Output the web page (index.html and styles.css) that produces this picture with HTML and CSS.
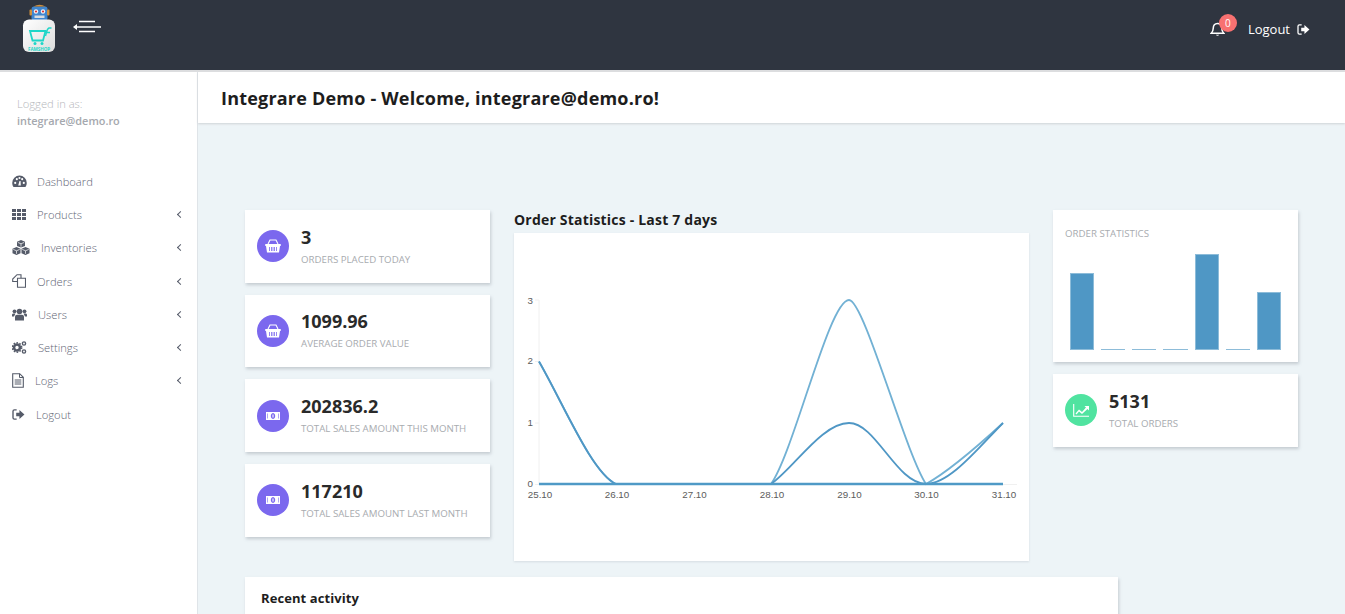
FILE: index.html
```html
<!DOCTYPE html>
<html lang="en">
<head>
<meta charset="utf-8">
<title>Integrare Demo</title>
<link rel="stylesheet" href="styles.css">
</head>
<body>
<header class="topbar">
  <div class="brand">
    <svg class="logo" viewBox="0 0 36 52" width="36" height="52">
      <defs><linearGradient id="tile" x1="0" y1="0" x2="1" y2="1"><stop offset="0" stop-color="#ffffff"/><stop offset="1" stop-color="#dcdcdc"/></linearGradient></defs>
      <rect x="10.500" y="5.500" width="16" height="14" rx="2.500" fill="#3f86d0"/>
      <rect x="8.500" y="8.500" width="2.500" height="6" rx="1" fill="#d08f3c"/>
      <rect x="26" y="8.500" width="2.500" height="6" rx="1" fill="#d08f3c"/>
      <path d="M12.500 5.500 Q18.500 2 24.500 5.500Z" fill="#d08f3c"/>
      <circle cx="15" cy="10.500" r="2.200" fill="#f3f3f3"/><circle cx="15" cy="10.500" r="1.100" fill="#d33"/>
      <circle cx="22" cy="10.500" r="2.200" fill="#f3f3f3"/><circle cx="22" cy="10.500" r="1.100" fill="#d33"/>
      <rect x="13.500" y="14.500" width="10" height="2.500" fill="#d9dde2"/>
      <rect x="2" y="18.500" width="32" height="32.500" rx="6" fill="url(#tile)"/>
      <path d="M9 30h15.500l-2.500 9.500h-10.500z" fill="none" stroke="#1fd6c8" stroke-width="1.800"/>
      <path d="M24.500 35c1-3 1-7 3.500-8h2.500M24.500 31.500h4.500" fill="none" stroke="#1fd6c8" stroke-width="1.500"/>
      <circle cx="14" cy="42.500" r="1.500" fill="#1fd6c8"/><circle cx="21" cy="42.500" r="1.500" fill="#1fd6c8"/>
      <text x="18" y="49.500" class="logo-text" text-anchor="middle">FAMSHOP</text>
    </svg>
    <svg class="toggle" viewBox="0 0 30 14" width="30" height="14">
      <path d="M6 1.500h16M2 7h26M6 11.500h16" stroke="#fff" stroke-width="1.300" fill="none"/>
      <path d="M0 7l4-3v6z" fill="#fff"/>
    </svg>
  </div>
  <div class="top-actions">
    <span class="bell-wrap">
      <svg class="bell" viewBox="0 0 16 16" width="15" height="15"><path d="M8 1.500c-3 0-4.500 2.300-4.500 5 0 3-1 4.300-2.200 5.500h13.400c-1.200-1.200-2.200-2.500-2.200-5.500 0-2.700-1.500-5-4.500-5z" fill="none" stroke="#fff" stroke-width="1.600"/><path d="M6.300 13.500a1.800 1.800 0 0 0 3.400 0z" fill="#fff"/></svg>
      <span class="badge">0</span>
    </span>
    <a class="top-logout">Logout
      <svg viewBox="0 0 14 12" width="13" height="11"><path d="M5 1H2.500A1.500 1.500 0 0 0 1 2.500v7A1.500 1.500 0 0 0 2.500 11H5" fill="none" stroke="#fff" stroke-width="1.400"/><path d="M4.500 4H8V1l5.500 5L8 11V8H4.500z" fill="#fff"/></svg>
    </a>
  </div>
</header>
<div class="shell">
  <aside class="sidebar">
    <div class="who"><div class="who-label">Logged in as:</div><div class="who-mail">integrare@demo.ro</div></div>
    <nav class="nav">
      <a class="nav-row"><svg class="ni ni-14" viewBox="0 0 14 12" width="15" height="13"><path fill-rule="evenodd" d="M7 .5A6.800 6.800 0 0 0 .2 7.300c0 1.500.4 2.800 1.200 3.900h11.200a6.800 6.800 0 0 0 1.200-3.900A6.800 6.800 0 0 0 7 .5zM3 8.300a1 1 0 1 1 0-2 1 1 0 0 1 0 2zm1.500-3.500a1 1 0 1 1 0-2 1 1 0 0 1 0 2zM7 3.700a1 1 0 1 1 0-2 1 1 0 0 1 0 2zm1.200 6.100H5.800L7 5.600l1-.1zm1.300-5a1 1 0 1 1 0-2 1 1 0 0 1 0 2zm1.500 3.500a1 1 0 1 1 0-2 1 1 0 0 1 0 2z"/></svg><span class="nl">Dashboard</span></a>
      <a class="nav-row"><svg class="ni ni-15" viewBox="0 0 14 11" width="14" height="11"><path d="M0 0h4v3H0zM5 0h4v3H5zM10 0h4v3h-4zM0 4h4v3H0zM5 4h4v3H5zM10 4h4v3h-4zM0 8h4v3H0zM5 8h4v3H5zM10 8h4v3h-4z"/></svg><span class="nl">Products</span><span class="chev"></span></a>
      <a class="nav-row"><svg class="ni ni-19" viewBox="0 0 18 15" width="18" height="15"><path d="M9 0l4 1.700v4.200L9 7.600 5 5.900V1.700zM4.500 7l4 1.700v4.500L4.500 15l-4-1.800V8.700zM13.500 7l4 1.700v4.500l-4 1.800-4-1.800V8.700z"/><path d="M5.800 2.400L9 3.800l3.200-1.400M1.300 9.400l3.200 1.400 3.200-1.400M10.300 9.400l3.200 1.400 3.200-1.400M9 3.800v3M4.500 10.800v3M13.500 10.800v3" stroke="#fff" stroke-width=".7" fill="none"/></svg><span class="nl">Inventories</span><span class="chev"></span></a>
      <a class="nav-row"><svg class="ni ni-15" viewBox="0 0 14 14" width="14" height="14"><path d="M5 .7h4v3.500H5.500v3.300H.7V5zM5.500 4.200h8v9.100h-8z" fill="none" stroke="#555b69" stroke-width="1.100"/></svg><span class="nl">Orders</span><span class="chev"></span></a>
      <a class="nav-row"><svg class="ni ni-16" viewBox="0 0 15 12" width="15" height="13"><circle cx="7.500" cy="3" r="2.800"/><circle cx="2.500" cy="2.800" r="1.900"/><circle cx="12.500" cy="2.800" r="1.900"/><path d="M3 12V8.500c0-1.500 1-2.300 2-2.300h5c1 0 2 .8 2 2.300V12zM0 8V6.500C0 5.500.7 5 1.500 5h2l-1.500 3zM15 8V6.500c0-1-.7-1.500-1.500-1.500h-2l1.500 3z"/></svg><span class="nl">Users</span><span class="chev"></span></a>
      <a class="nav-row"><svg class="ni ni-16" viewBox="0 0 15 13" width="15" height="13"><circle cx="5" cy="6.500" r="3" fill="none" stroke="#555b69" stroke-width="2.600"/><circle cx="5" cy="6.500" r="4.700" fill="none" stroke="#555b69" stroke-width="1.400" stroke-dasharray="1.600 1.400"/><circle cx="12" cy="2.500" r="1.600" fill="none" stroke="#555b69" stroke-width="1.400"/><circle cx="12" cy="10.500" r="1.600" fill="none" stroke="#555b69" stroke-width="1.400"/></svg><span class="nl">Settings</span><span class="chev"></span></a>
      <a class="nav-row"><svg class="ni ni-13" viewBox="0 0 12 15" width="12" height="15"><path d="M.7.7h7l3.600 3.600v10H.7z" fill="none" stroke="#555b69" stroke-width="1.100"/><path d="M7.500.7v3.800h3.800M2.700 7h6.600M2.700 9h6.600M2.700 11h6.600" fill="none" stroke="#555b69"/></svg><span class="nl">Logs</span><span class="chev"></span></a>
      <a class="nav-row"><svg class="ni ni-13" viewBox="0 0 14 12" width="13" height="11"><path d="M5 1H2.500A1.500 1.500 0 0 0 1 2.500v7A1.500 1.500 0 0 0 2.500 11H5" fill="none" stroke="#555b69" stroke-width="1.500"/><path d="M4.500 4H8V1l5.500 5L8 11V8H4.500z"/></svg><span class="nl">Logout</span></a>
    </nav>
  </aside>
  <main class="main">
    <div class="titlebar"><h1>Integrare Demo - Welcome, integrare@demo.ro!</h1></div>
    <div class="content">
      <div class="dash">
        <div class="col col-left">
          <section class="card stat"><span class="disc"><svg viewBox="0 0 16 14" width="16" height="14"><use href="#ic-basket"/></svg></span><div><div class="num">3</div><div class="cap">Orders placed today</div></div></section>
          <section class="card stat"><span class="disc"><svg viewBox="0 0 16 14" width="16" height="14"><use href="#ic-basket"/></svg></span><div><div class="num">1099.96</div><div class="cap">Average order value</div></div></section>
          <section class="card stat"><span class="disc"><svg viewBox="0 0 16 12" width="16" height="12"><use href="#ic-money"/></svg></span><div><div class="num">202836.2</div><div class="cap">Total sales amount this month</div></div></section>
          <section class="card stat"><span class="disc"><svg viewBox="0 0 16 12" width="16" height="12"><use href="#ic-money"/></svg></span><div><div class="num">117210</div><div class="cap">Total sales amount last month</div></div></section>
        </div>
        <div class="col-mid">
          <h2 class="mid-title">Order Statistics - Last 7 days</h2>
          <div class="card chart-card">
            <svg class="line-chart" viewBox="0 0 515 328" width="515" height="328">
              <path d="M25 67V251.500M25 251.500H503M21 67h4M21 128.500h4M21 190h4M21 251.500h4" class="axis"/>
              <g class="tick-y" text-anchor="end">
                <text x="19" y="70.500">3</text><text x="19" y="131">2</text><text x="19" y="193">1</text><text x="19" y="254">0</text>
              </g>
              <g class="tick-x" text-anchor="middle">
                <text x="26" y="265">25.10</text><text x="103" y="265">26.10</text><text x="180.500" y="265">27.10</text><text x="258" y="265">28.10</text><text x="335.500" y="265">29.10</text><text x="412.500" y="265">30.10</text><text x="490" y="265">31.10</text>
              </g>
              <path class="ln ln-a" d="M25 128.500C50 172 78 240 102 251H180H257C280 219 315 67 335 67C350 67 391 219 412 251C432 240 465 212 489 190"/>
              <path class="ln ln-b" d="M25 128.500C50 172 78 240 102 251H180H257C280 235 308 190 335 190C362 190 382 250 412 251C436 251 465 214 489 190"/>
              <path class="ln ln-c" d="M25 251H489"/>
            </svg>
          </div>
        </div>
        <div class="col col-right">
          <section class="card bars-card">
            <div class="cap">Order statistics</div>
            <div class="bars">
              <span class="bar bar-4"></span><span class="bar bar-0"></span><span class="bar bar-0"></span><span class="bar bar-0"></span><span class="bar bar-5"></span><span class="bar bar-0"></span><span class="bar bar-3"></span>
            </div>
          </section>
          <section class="card stat"><span class="disc disc-green"><svg viewBox="0 0 16 13" width="16" height="13"><path d="M.7 0v12.300H16" fill="none" stroke="#fff" stroke-width="1.100"/><path d="M2.500 9.500L6 5.500l3 2.500L13 3.500 11.500 2H16v4.500l-1.500-1.500L9 10 6 7.500 3.500 10.500z" fill="#fff"/></svg></span><div><div class="num">5131</div><div class="cap">Total orders</div></div></section>
        </div>
      </div>
      <section class="card recent"><h3>Recent activity</h3></section>
    </div>
  </main>
</div>
<svg class="defs" width="0" height="0">
  <symbol id="ic-basket" viewBox="0 0 16 14"><path d="M1 5h14a1 1 0 0 1 0 2l-1 6.500H2L1 7a1 1 0 0 1 0-2z" fill="#fff"/><path d="M3 5L5 1h6l2 4" fill="none" stroke="#fff" stroke-width="1.100"/><path d="M4.500 8v4M6.500 8v4M8 8v4M9.500 8v4M11.500 8v4" stroke="#7b68ee" stroke-width=".8"/></symbol>
  <symbol id="ic-money" viewBox="0 0 16 12"><path fill-rule="evenodd" fill="#fff" d="M1 2h14v8H1zM8 3a2.200 3 0 1 0 .01 0z"/><path d="M8 4.500v3" stroke="#fff" stroke-width="1.100"/><path d="M2.500 3.500v5M13.500 3.500v5" stroke="#7b68ee" stroke-width=".6"/></symbol>
</svg>
</body>
</html>
```
FILE: styles.css
```css
* { box-sizing: border-box; }
html, body { margin: 0; height: 100%; overflow: hidden; }
body { font-family: "Open Sans", "Noto Sans", sans-serif; background: #fff; color: #222; }
.defs { display: none; }

.topbar { height: 70px; background: #2f3540; display: flex; justify-content: space-between; box-shadow: 0 2px 0 #dcdddf; position: relative; z-index: 2; }
.brand { display: flex; align-items: flex-start; padding: 1px 0 0 21px; gap: 16px; }
.logo-text { font-size: 4.500px; font-weight: 700; fill: #1fd6c8; }
.toggle { margin-top: 19px; }
.top-actions { display: flex; align-items: center; padding: 0 35px 12px 0; gap: 23px; color: #fff; font-size: 13px; }
.bell-wrap { position: relative; display: flex; }
.badge { position: absolute; left: 9px; top: -8px; width: 18px; height: 18px; border-radius: 50%; background: #f87171; color: #fff; font-size: 10px; line-height: 18px; text-align: center; }
.top-logout { display: flex; align-items: center; gap: 7px; }

.shell { display: flex; height: calc(100% - 70px); padding-top: 2px; }
.sidebar { width: 198px; flex: none; background: #fff; border-right: 1px solid #dfe4e8; padding: 23px 12px 0; }
.who { font-size: 11.200px; line-height: 17px; padding-left: 5px; color: #b5b7bb; font-weight: 300; }
.who-mail { font-size: 10.900px; font-weight: 600; color: #a5a8ae; }
.nav { margin-top: 35.700px; }
.nav-row { display: flex; align-items: center; height: 33.250px; color: #5f6675; font-size: 11.200px; font-weight: 300; }
.ni { fill: #555b69; flex: none; }
.ni-13 { margin-right: 11px; }
.ni-14 { margin-right: 10px; }
.ni-15 { margin-right: 11px; }
.ni-16 { margin-right: 11px; }
.ni-19 { margin-right: 11px; }
.nl { flex: 1; }
.chev { width: 5px; height: 5px; border-left: 1px solid #555b69; border-bottom: 1px solid #555b69; transform: rotate(45deg); margin-right: 2px; }

.main { flex: 1; min-width: 0; background: #edf4f7; }
.titlebar { height: 51px; background: #fff; display: flex; align-items: center; padding-left: 23px; box-shadow: 0 1px 2px #cfd3d6; }
.titlebar h1 { margin: 0; font-size: 18px; font-weight: 700; color: #1d1d1d; letter-spacing: .2px; }
.content { padding: 87px 0 0 47px; }
.dash { display: flex; gap: 24px; }
.col { width: 245px; display: flex; flex-direction: column; gap: 12px; flex: none; }
.card { background: #fff; box-shadow: 1px 2px 3px rgba(120, 130, 140, .35); }
.stat { height: 72.670px; display: flex; align-items: center; padding-left: 12px; gap: 12px; }
.disc { width: 32px; height: 32px; border-radius: 50%; background: #7b68ee; display: flex; align-items: center; justify-content: center; flex: none; }
.disc-green { background: #50e3a0; }
.num { font-size: 18px; font-weight: 700; line-height: 24px; color: #2a2a2a; margin-top: -1px; }
.cap { font-size: 9.700px; line-height: 14px; text-transform: uppercase; color: #a8abaf; margin-top: 4px; }
.col-mid { width: 515px; flex: none; }
.mid-title { margin: 0; height: 23px; font-size: 14px; line-height: 20px; font-weight: 700; color: #1d1d1d; letter-spacing: .2px; }
.chart-card { height: 328px; box-shadow: 0 1px 2px rgba(120, 130, 140, .2); }
.line-chart { display: block; }
.axis { stroke: #f0f0f0; fill: none; }
.tick-y text, .tick-x text { font-family: "Liberation Sans", sans-serif; font-size: 9.800px; fill: #5c5c5c; }
.ln { fill: none; }
.ln-a { stroke: #72b1d4; stroke-width: 1.800; }
.ln-b { stroke: #4f97c5; stroke-width: 1.800; }
.ln-c { stroke: #4f9ac6; stroke-width: 2.500px; }
.bars-card { height: 152px; padding: 14px 12px 0; }
.bars-card .cap { margin-top: 3px; }
.bars { height: 96px; margin-top: 13px; padding: 0 5px; display: flex; align-items: flex-end; gap: 7px; }
.bar { flex: 1; background: #4f97c5; box-shadow: inset 0 0 0 1px #8dbcd9; }
.bar-0 { height: 1px; background: #a9cbe0; }
.bar-3 { height: 58px; }
.bar-4 { height: 77px; }
.bar-5 { height: 96px; }
.recent { width: 873px; height: 200px; margin-top: 16px; padding: 11px 16px; }
.recent h3 { margin: 0; font-size: 13px; line-height: 20px; font-weight: 700; color: #1d1d1d; letter-spacing: .08px; }
```
